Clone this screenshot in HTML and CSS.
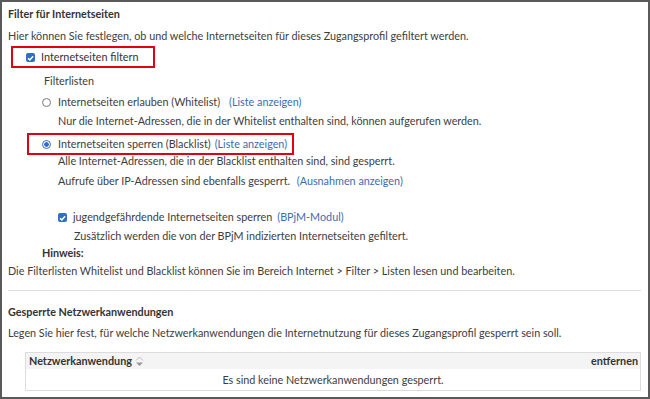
FILE: index.html
```html
<!DOCTYPE html>
<html lang="de">
<head>
    <meta charset="UTF-8">
    <title>Zugangsprofil - Filter</title>
    <link rel="stylesheet" href="styles.css">
</head>
<body>
<div class="frame">
    <div class="title">Filter für Internetseiten</div>
    <div class="intro">Hier können Sie festlegen, ob und welche Internetseiten für dieses Zugangsprofil gefiltert werden.</div>

    <div class="mark mark-filter">
        <span class="check"><svg viewBox="0 0 10 10" width="10" height="10"><path d="M2.2 5.2 L4.2 7.1 L7.9 3" fill="none" stroke="#fff" stroke-width="1.6"/></svg></span>
        <span>Internetseiten filtern</span>
    </div>

    <div class="sub-title">Filterlisten</div>

    <div class="option opt-white">
        <span class="radio"></span>
        <span>Internetseiten erlauben (Whitelist)</span>
        <a class="link link-white">(Liste anzeigen)</a>
    </div>
    <div class="desc desc-white">Nur die Internet-Adressen, die in der Whitelist enthalten sind, können aufgerufen werden.</div>

    <div class="mark mark-black">
        <span class="radio radio-on"></span>
        <span>Internetseiten sperren (Blacklist)</span>
        <a class="link link-black">(Liste anzeigen)</a>
    </div>
    <div class="desc desc-black1">Alle Internet-Adressen, die in der Blacklist enthalten sind, sind gesperrt.</div>
    <div class="desc desc-black2">Aufrufe über IP-Adressen sind ebenfalls gesperrt. <a class="link link-ip">(Ausnahmen anzeigen)</a></div>

    <div class="option opt-bpjm">
        <span class="check"><svg viewBox="0 0 10 10" width="10" height="10"><path d="M2.2 5.2 L4.2 7.1 L7.9 3" fill="none" stroke="#fff" stroke-width="1.6"/></svg></span>
        <span>jugendgefährdende Internetseiten sperren</span>
        <a class="link link-bpjm">(BPjM-Modul)</a>
    </div>
    <div class="desc desc-bpjm">Zusätzlich werden die von der BPjM indizierten Internetseiten gefiltert.</div>

    <div class="hint-title">Hinweis:</div>
    <div class="hint">Die Filterlisten Whitelist und Blacklist können Sie im Bereich Internet &gt; Filter &gt; Listen lesen und bearbeiten.</div>

    <div class="divider"></div>

    <div class="title title-apps">Gesperrte Netzwerkanwendungen</div>
    <div class="intro intro-apps">Legen Sie hier fest, für welche Netzwerkanwendungen die Internetnutzung für dieses Zugangsprofil gesperrt sein soll.</div>

    <div class="apps">
        <div class="apps-head">
            <span class="col-name">Netzwerkanwendung
                <svg class="sort" viewBox="0 0 9 13" width="9" height="13"><path d="M1 5.5 L4.5 2 L8 5.5" fill="none" stroke="#bbb" stroke-width="1"/><path d="M1 7.5 L8 7.5 L4.5 11 Z" fill="#999"/></svg>
            </span>
            <span class="col-remove">entfernen</span>
        </div>
        <div class="apps-empty">Es sind keine Netzwerkanwendungen gesperrt.</div>
    </div>
</div>
</body>
</html>
```

FILE: styles.css
```css
body {
    margin: 0;
    padding: 0;
    font-family: Lato, "Open Sans", sans-serif;
    font-size: 10.8px;
    color: #3d3d3d;
    background: #fff;
}
.frame {
    width: 650px;
    height: 399px;
    box-sizing: border-box;
    border: 2px solid #5a5a5a;
    padding: 2px 7px 0 6px;
    line-height: 18px;
}
.title {
    margin-top: 1px;
    font-weight: bold;
    color: #333;
}
.intro {
    margin-top: 4px;
}
.mark {
    display: flex;
    align-items: center;
    width: fit-content;
    border: 2px solid #e3000f;
    height: 18px;
}
.mark-filter {
    margin: 1px 0 0 3px;
    padding: 0 15px 0 13px;
    color: #333;
}
.mark-black {
    margin: 3px 0 0 19px;
    padding: 0 5px 0 13px;
}
.check {
    width: 9px;
    height: 9px;
    border-radius: 2px;
    background: #2f6fc9;
    margin-right: 6px;
    display: inline-flex;
    overflow: hidden;
}
.radio {
    width: 7px;
    height: 7px;
    border: 1px solid #777;
    border-radius: 50%;
    margin-right: 7px;
    box-sizing: content-box;
    background: #fff;
}
.radio-on {
    border-color: #2f6fc9;
    background: radial-gradient(circle, #2f6fc9 0 2px, #fff 2.6px);
}
.sub-title {
    margin: 4px 0 0 36px;
}
.option {
    display: flex;
    align-items: center;
}
.opt-white {
    margin: 3px 0 0 34px;
}
.opt-bpjm {
    margin: 18px 0 0 50px;
}
.link {
    color: #3b6cb3;
    margin-left: 9px;
}
.link-black {
    margin-left: 4px;
}
.link-ip {
    margin-left: 4px;
}
.link-bpjm {
    margin-left: 5px;
}
.desc {
    margin-left: 50px;
}
.desc-white {
    margin-top: 1px;
}
.desc-black1 {
    margin-top: -3px;
}
.desc-black2 {
    margin-top: 2px;
}
.desc-bpjm {
    margin-left: 66px;
    margin-top: 1px;
}
.hint-title {
    margin: -1px 0 0 34px;
    font-weight: bold;
    color: #333;
}
.hint {
    margin-top: 0;
}
.divider {
    margin-top: 10px;
    border-top: 1px solid #ddd;
}
.title-apps {
    margin-top: 12px;
}
.intro-apps {
    margin-top: 3px;
}
.apps {
    margin: 10px 0 0 17px;
    border: 1px solid #dcdcdc;
}
.apps-head {
    display: flex;
    justify-content: space-between;
    align-items: center;
    height: 16px;
    padding: 0 2px 0 3px;
    background: #f4f4f4;
    font-weight: bold;
    color: #333;
}
.col-name {
    display: flex;
    align-items: center;
    gap: 3px;
}
.apps-empty {
    height: 21px;
    line-height: 21px;
    text-align: center;
}
```
